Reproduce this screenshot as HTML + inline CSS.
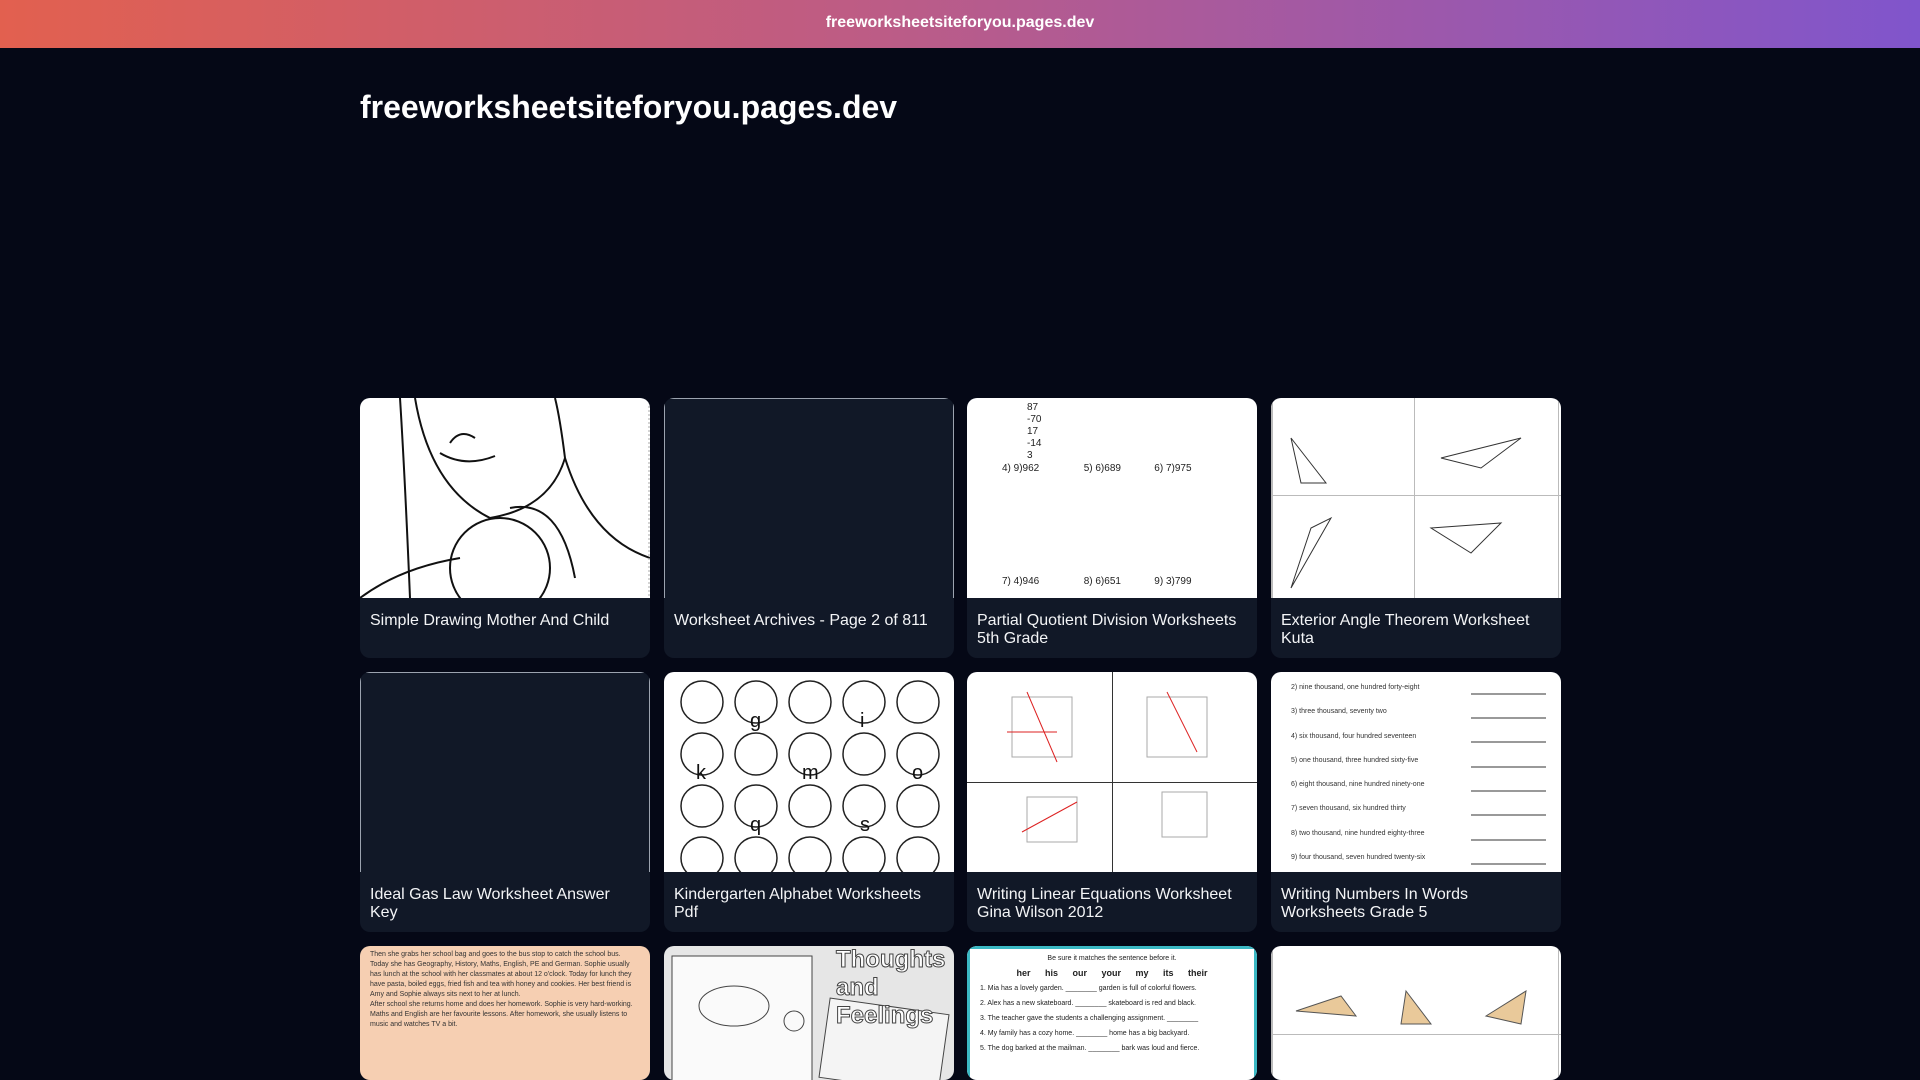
<!DOCTYPE html>
<html><head><meta charset="utf-8"><style>
*{margin:0;padding:0;box-sizing:border-box}
body{width:1920px;height:1080px;overflow:hidden;background:#050816;font-family:"Liberation Sans",sans-serif;color:#fff;position:relative}
.top{height:48px;background:linear-gradient(90deg,#e2604f,#bd5c85 45%,#8055cc);text-align:center;font-weight:bold;font-size:16px;line-height:46px}
h1{position:absolute;left:360px;top:89px;font-size:32px;font-weight:bold}
.card{position:absolute;width:290px;height:260px;background:#111827;border-radius:10px;overflow:hidden}
.img{height:200px;background:#fff;position:relative;overflow:hidden}
.img.broken{background:#111827;border:1px solid #9ca3af;border-bottom:none}
.t{padding:14px 10px 10px;font-size:16px;line-height:18px;color:#f3f4f6}
.ln{position:absolute;background:#bbb}
</style></head><body>
<div class="top">freeworksheetsiteforyou.pages.dev</div>
<h1>freeworksheetsiteforyou.pages.dev</h1>

<div class="card" style="left:360px;top:398px"><div class="img">
<svg width="290" height="200"><g fill="none" stroke="#111" stroke-width="2"><path d="M40 0 Q45 80 50 200"/><path d="M55 0 Q70 90 130 120 Q190 110 205 60 Q200 20 195 0"/><path d="M80 55 Q105 70 135 58"/><path d="M90 45 Q100 30 115 40"/><path d="M150 110 Q200 100 215 180"/><path d="M205 60 Q230 140 290 160"/><circle cx="140" cy="170" r="50"/><path d="M0 200 Q40 170 100 160"/></g><line x1="289" y1="0" x2="289" y2="200" stroke="#aaa" stroke-dasharray="2 2"/></svg>
</div><div class="t">Simple Drawing Mother And Child</div></div>

<div class="card" style="left:664px;top:398px"><div class="img broken"></div><div class="t">Worksheet Archives - Page 2 of 811</div></div>

<div class="card" style="left:967px;top:398px"><div class="img" style="font-size:10px;color:#222">
<div style="position:absolute;left:60px;top:4px;line-height:12px">87<br>-70<br>17<br>-14<br>3</div>
<div style="position:absolute;left:35px;top:65px">4) 9)962 &nbsp;&nbsp;&nbsp;&nbsp;&nbsp;&nbsp;&nbsp;&nbsp;&nbsp;&nbsp;&nbsp;&nbsp;&nbsp;&nbsp; 5) 6)689 &nbsp;&nbsp;&nbsp;&nbsp;&nbsp;&nbsp;&nbsp;&nbsp;&nbsp;&nbsp; 6) 7)975</div>
<div style="position:absolute;left:35px;top:178px">7) 4)946 &nbsp;&nbsp;&nbsp;&nbsp;&nbsp;&nbsp;&nbsp;&nbsp;&nbsp;&nbsp;&nbsp;&nbsp;&nbsp;&nbsp; 8) 6)651 &nbsp;&nbsp;&nbsp;&nbsp;&nbsp;&nbsp;&nbsp;&nbsp;&nbsp;&nbsp; 9) 3)799</div>
</div><div class="t">Partial Quotient Division Worksheets 5th Grade</div></div>

<div class="card" style="left:1271px;top:398px"><div class="img">
<div class="ln" style="left:0;top:0;width:2px;height:200px"></div><div class="ln" style="left:143px;top:0;width:1px;height:200px"></div><div class="ln" style="left:0;top:97px;width:290px;height:1px"></div><div class="ln" style="right:2px;top:0;width:1px;height:200px"></div>
<svg width="290" height="200"><g fill="none" stroke="#333"><path d="M20 40 L30 85 L55 85 Z"/><path d="M170 60 L250 40 L210 70 Z"/><path d="M60 120 L20 190 L40 130 Z"/><path d="M160 130 L230 125 L200 155 Z"/></g></svg>
</div><div class="t">Exterior Angle Theorem Worksheet Kuta</div></div>

<div class="card" style="left:360px;top:672px"><div class="img broken"></div><div class="t">Ideal Gas Law Worksheet Answer Key</div></div>

<div class="card" style="left:664px;top:672px"><div class="img">
<svg width="290" height="200"><g fill="none" stroke="#222" stroke-width="1.5"><g id="r"><circle cx="38" cy="30" r="21"/><circle cx="92" cy="30" r="21"/><circle cx="146" cy="30" r="21"/><circle cx="200" cy="30" r="21"/><circle cx="254" cy="30" r="21"/></g><use href="#r" y="52"/><use href="#r" y="104"/><use href="#r" y="156"/></g>
<g font-size="20" fill="#111" font-family="Liberation Sans"><text x="86" y="55">g</text><text x="196" y="55">i</text><text x="32" y="107">k</text><text x="138" y="107">m</text><text x="248" y="107">o</text><text x="86" y="159">q</text><text x="196" y="159">s</text></g></svg>
</div><div class="t">Kindergarten Alphabet Worksheets Pdf</div></div>

<div class="card" style="left:967px;top:672px"><div class="img">
<div class="ln" style="left:145px;top:0;width:1px;height:200px;background:#333"></div><div class="ln" style="left:0;top:110px;width:290px;height:1px;background:#333"></div>
<svg width="290" height="200"><g stroke="#aaa"><rect x="45" y="25" width="60" height="60" fill="none"/><rect x="180" y="25" width="60" height="60" fill="none"/><rect x="60" y="125" width="50" height="45" fill="none"/><rect x="195" y="120" width="45" height="45" fill="none"/></g><g stroke="#d22" fill="none"><path d="M60 20 L90 90"/><path d="M200 20 L230 80"/><path d="M55 160 L110 130"/><path d="M40 60 L90 60"/></g></svg>
</div><div class="t">Writing Linear Equations Worksheet Gina Wilson 2012</div></div>

<div class="card" style="left:1271px;top:672px"><div class="img" style="font-size:7px;color:#333;line-height:24.3px;padding:4px 0 0 20px">
2) nine thousand, one hundred forty-eight<br>3) three thousand, seventy two<br>4) six thousand, four hundred seventeen<br>5) one thousand, three hundred sixty-five<br>6) eight thousand, nine hundred ninety-one<br>7) seven thousand, six hundred thirty<br>8) two thousand, nine hundred eighty-three<br>9) four thousand, seven hundred twenty-six
<svg style="position:absolute;right:15px;top:0" width="75" height="200"><g stroke="#333"><line x1="0" y1="22" x2="75" y2="22"/><line x1="0" y1="46" x2="75" y2="46"/><line x1="0" y1="70" x2="75" y2="70"/><line x1="0" y1="95" x2="75" y2="95"/><line x1="0" y1="119" x2="75" y2="119"/><line x1="0" y1="143" x2="75" y2="143"/><line x1="0" y1="168" x2="75" y2="168"/><line x1="0" y1="192" x2="75" y2="192"/></g></svg>
</div><div class="t">Writing Numbers In Words Worksheets Grade 5</div></div>

<div class="card" style="left:360px;top:946px;height:134px"><div class="img" style="background:#f6cfb2;font-size:7px;color:#333;padding:4px 10px;line-height:10px">Then she grabs her school bag and goes to the bus stop to catch the school bus. Today she has Geography, History, Maths, English, PE and German. Sophie usually has lunch at the school with her classmates at about 12 o'clock. Today for lunch they have pasta, boiled eggs, fried fish and tea with honey and cookies. Her best friend is Amy and Sophie always sits next to her at lunch.<br>After school she returns home and does her homework. Sophie is very hard-working. Maths and English are her favourite lessons. After homework, she usually listens to music and watches TV a bit.</div></div>

<div class="card" style="left:664px;top:946px;height:134px"><div class="img" style="background:#e6e6e6">
<div style="position:absolute;left:172px;top:0;font-size:24px;font-weight:bold;color:#fff;-webkit-text-stroke:1px #444">Thoughts<br>and Feelings</div>
<svg width="290" height="140"><g fill="none" stroke="#444"><rect x="8" y="10" width="140" height="130" fill="#fafafa"/><ellipse cx="70" cy="60" rx="35" ry="20"/><circle cx="130" cy="75" r="10"/><rect x="160" y="60" width="120" height="80" fill="#f4f4f4" transform="rotate(8 220 100)"/></g></svg>
</div></div>

<div class="card" style="left:967px;top:946px;height:134px"><div class="img" style="border:3px solid #3bb8c4;border-bottom:none;font-size:7px;color:#222;padding:2px 10px;line-height:15px">
<div style="text-align:center">Be sure it matches the sentence before it.</div>
<div style="font-size:9px;font-weight:bold;text-align:center;word-spacing:12px">her his our your my its their</div>
1. Mia has a lovely garden. ________ garden is full of colorful flowers.<br>2. Alex has a new skateboard. ________ skateboard is red and black.<br>3. The teacher gave the students a challenging assignment. ________<br>4. My family has a cozy home. ________ home has a big backyard.<br>5. The dog barked at the mailman. ________ bark was loud and fierce.</div></div>

<div class="card" style="left:1271px;top:946px;height:134px"><div class="img">
<div class="ln" style="left:0;top:0;width:2px;height:200px"></div><div class="ln" style="right:2px;top:0;width:1px;height:200px"></div><div class="ln" style="left:0;top:88px;width:290px;height:1px"></div>
<svg width="290" height="140"><g fill="#e9c99a" stroke="#555"><path d="M25 65 L70 50 L85 70 Z"/><path d="M135 45 L160 78 L130 78 Z"/><path d="M215 70 L255 45 L250 78 Z"/></g></svg>
</div></div>
</body></html>
